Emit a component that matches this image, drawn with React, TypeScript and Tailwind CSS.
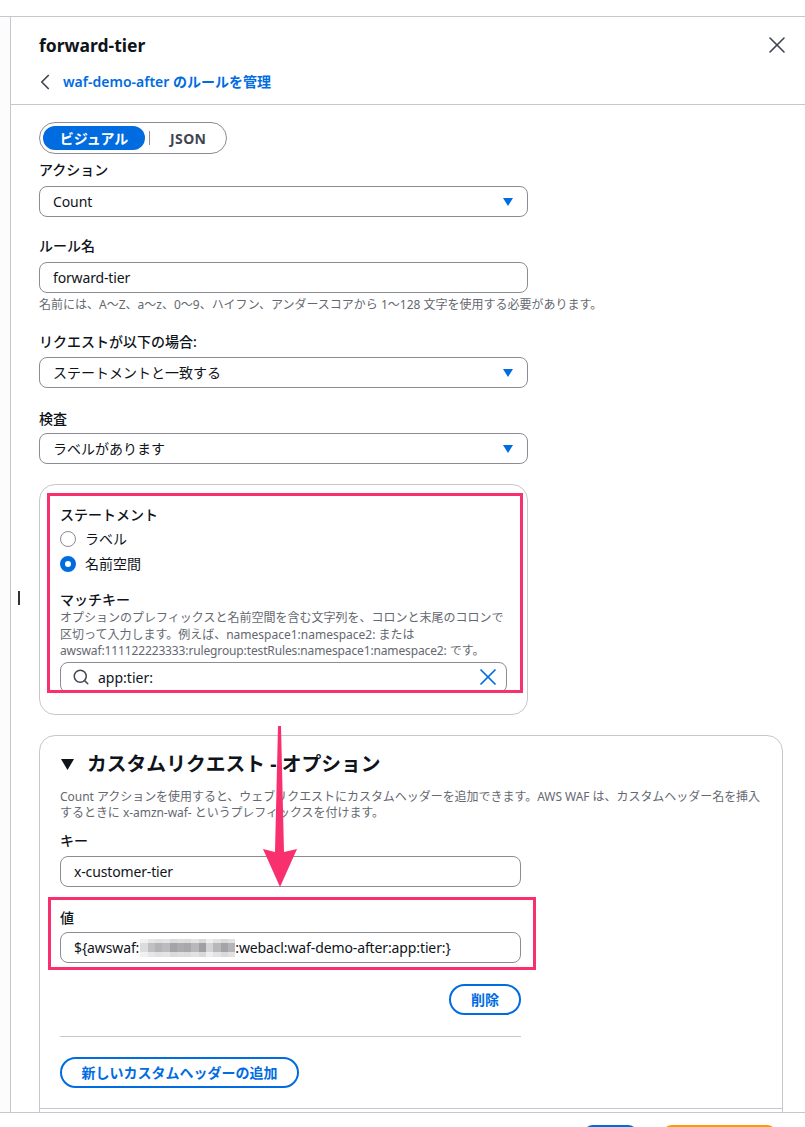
import { ChevronLeft, Search, X } from 'lucide-react';
import type { ReactNode } from 'react';

function Label({ children, className = '' }: { children: ReactNode; className?: string }) {
  return <div className={`text-[14px] leading-[20px] font-medium text-[#0f141a] ${className}`}>{children}</div>;
}

function Field({
  children,
  className = '',
  padding = 'pl-[13px] pr-[14px]',
}: {
  children: ReactNode;
  className?: string;
  padding?: string;
}) {
  return (
    <div
      className={`flex h-[31px] items-center rounded-lg border border-[#8c8c94] bg-white text-[14px] text-[#0f141a] ${padding} ${className}`}
    >
      {children}
    </div>
  );
}

function Select({ value, className = '' }: { value: string; className?: string }) {
  return (
    <Field className={`justify-between ${className}`}>
      <span>{value}</span>
      <svg width="10" height="8" viewBox="0 0 10 8">
        <path d="M0 0h10L5 8z" fill="#006ce0" />
      </svg>
    </Field>
  );
}

function Radio({ checked, label }: { checked?: boolean; label: string }) {
  return (
    <div className="flex h-[25px] items-center gap-[9px] text-[14px] text-[#0f141a]">
      {checked ? (
        <span className="h-4 w-4 rounded-full border-[5px] border-[#006ce0] bg-white" />
      ) : (
        <span className="h-4 w-4 rounded-full border border-[#8c8c94] bg-white" />
      )}
      <span>{label}</span>
    </div>
  );
}

function PillButton({ children, className = '' }: { children: ReactNode; className?: string }) {
  return (
    <div
      className={`flex h-[31px] items-center justify-center rounded-full border-2 border-[#006ce0] text-[14px] font-semibold text-[#006ce0] ${className}`}
    >
      {children}
    </div>
  );
}

const blurCells = [
  'bg-[#dcdcdc]', 'bg-[#c0c0c2]', 'bg-[#b4b4b7]', 'bg-[#bcbcbe]', 'bg-[#a4a4a8]', 'bg-[#acacaf]',
  'bg-[#a8a8ab]', 'bg-[#b8b8ba]', 'bg-[#a0a0a4]', 'bg-[#d4d4d4]', 'bg-[#b8b8ba]', 'bg-[#a4a4a8]', 'bg-[#b4b4b6]',
];

export default function App() {
  return (
    <div className="relative h-[1127px] w-[805px] overflow-hidden bg-white font-['Noto_Sans','Noto_Sans_CJK_JP',sans-serif]">
      <div className="h-[17px] border-b border-[#c6c6cd]" />
      <div className="flex h-[1096px]">
        <div className="w-[11px] shrink-0 border-r border-[#c6c6cd] bg-[#fcfcfc]" />
        <div className="min-w-0 flex-1">
          <div className="relative h-[88px] border-b border-[#c6c6cd] pl-[28px]">
            <div className="pt-[16px] text-[17.5px] leading-[24px] font-bold text-[#0f141a]">forward-tier</div>
            <div className="mt-[15px] flex items-center text-[14px] leading-[20px] font-semibold text-[#006ce0]">
              <ChevronLeft size={26} strokeWidth={1.6} className="-my-[3px] -ml-[7px] mr-[5px] text-[#424650]" />
              waf-demo-after のルールを管理
            </div>
            <X size={28} strokeWidth={1.4} className="absolute right-[14px] top-[14px] text-[#424650]" />
          </div>

          <div className="pl-[28px] pt-[17px]">
            <div className="flex h-[32px] w-[188px] items-center rounded-full border border-[#8c8c94] pl-[3px]">
              <div className="flex h-[24px] w-[102px] items-center justify-center rounded-full bg-[#006ce0] text-[14px] font-bold text-white">
                ビジュアル
              </div>
              <div className="ml-[4px] h-[14px] w-px bg-[#8c8c94]" />
              <div className="ml-[20px] text-[14px] font-bold tracking-[0.4px] text-[#424650]">JSON</div>
            </div>

            <Label className="mt-[6px]">アクション</Label>
            <Select value="Count" className="mt-[6px] w-[489px] tracking-[-0.1px]" />

            <Label className="mt-[19px]">ルール名</Label>
            <Field className="mt-[6px] w-[489px] tracking-[-0.15px]">forward-tier</Field>
            <div className="mt-[4px] text-[12px] leading-[16px] text-[#656871]">
              名前には、A〜Z、a〜z、0〜9、ハイフン、アンダースコアから 1〜128 文字を使用する必要があります。
            </div>

            <Label className="mt-[19px]">リクエストが以下の場合:</Label>
            <Select value="ステートメントと一致する" className="mt-[5px] w-[489px]" />

            <Label className="mt-[21px]">検査</Label>
            <Select value="ラベルがあります" className="mt-[4px] w-[489px]" />

            <div className="mt-[20px] h-[231px] w-[489px] rounded-2xl border border-[#c6c6cd] pl-[20px] pr-[20px] pt-[20px]">
              <Label>ステートメント</Label>
              <div className="mt-[1px]">
                <Radio label="ラベル" />
                <Radio checked label="名前空間" />
              </div>
              <Label className="mt-[14px]">マッチキー</Label>
              <div className="text-[12px] leading-[16.5px] text-[#656871]">
                オプションのプレフィックスと名前空間を含む文字列を、コロンと末尾のコロンで区切って入力します。例えば、namespace1:namespace2: または{' '}
                <span className="tracking-[-0.13px]">awswaf:111122223333:rulegroup:testRules:namespace1:namespace2:</span> です。
              </div>
              <Field className="mt-[2px] w-[447px]" padding="pl-[11px] pr-[4px]">
                <Search size={18} className="mr-[8px] text-[#424650]" />
                <span className="flex-1">app:tier:</span>
                <X size={28} strokeWidth={1.5} className="text-[#006ce0]" />
              </Field>
            </div>

            <div className="mt-[20px] h-[400px] w-[744px] rounded-t-2xl border border-[#c6c6cd] px-[20px] pt-[14px]">
              <div className="flex items-center text-[19.8px] leading-[28px] font-bold text-[#0f141a]">
                <svg width="13" height="11" viewBox="0 0 13 11" className="ml-[1px] mr-[13px]">
                  <path d="M0 0h13L6.5 11z" fill="#0f141a" />
                </svg>
                カスタムリクエスト - オプション
              </div>
              <div className="mt-[11px] text-[12px] leading-[16px] tracking-[-0.04px] text-[#656871]">
                Count アクションを使用すると、ウェブリクエストにカスタムヘッダーを追加できます。AWS WAF は、カスタムヘッダー名を挿入するときに x-amzn-waf- というプレフィックスを付けます。
              </div>
              <div className="w-[461px]">
                <Label className="mt-[10px]">キー</Label>
                <Field className="mt-[5px] tracking-[-0.15px]">x-customer-tier</Field>
                <Label className="mt-[21px]">値</Label>
                <Field className="mt-[4px] tracking-[-0.12px]">
                  {'${awswaf:'}
                  <span className="relative ml-[1px] inline-block h-[18px] w-[95px] overflow-hidden">
                    <span className="flex h-full">
                      {blurCells.map((c, i) => (
                        <span key={i} className={`h-full flex-1 ${c}`} />
                      ))}
                    </span>
                    <span className="absolute left-0 top-0 h-[4px] w-full bg-white/60" />
                    <span className="absolute bottom-0 left-0 h-[5px] w-full bg-white/60" />
                  </span>
                  :webacl:waf-demo-after:app:tier:{'}'}
                </Field>
                <div className="mt-[21px] flex justify-end">
                  <PillButton className="w-[72px]">削除</PillButton>
                </div>
                <div className="mt-[21px] h-px bg-[#c6c6cd]" />
                <PillButton className="mt-[20px] w-[239px]">新しいカスタムヘッダーの追加</PillButton>
              </div>
              <div className="-mx-[20px] mt-[20px] h-px bg-[#c6c6cd]" />
            </div>
          </div>
        </div>
      </div>

      {/* footer */}
      <div className="absolute left-0 top-[1112px] h-[15px] w-full border-t border-[#c6c6cd] bg-white">
        <div className="absolute left-[583px] top-[12px] h-[20px] w-[55px] rounded-full bg-[#006ce0]" />
        <div className="absolute left-[662px] top-[12px] h-[20px] w-[115px] rounded-full bg-[#ff9900]" />
      </div>

      {/* screenshot annotations */}
      <div className="absolute left-[18px] top-[591px] h-[14px] w-[2px] bg-[#333]" />
      <div className="pointer-events-none absolute left-[47px] top-[493px] h-[200px] w-[476px] border-[3px] border-[#f8306e]" />
      <div className="pointer-events-none absolute left-[48px] top-[897px] h-[73px] w-[488px] border-[3px] border-[#f8306e]" />
      <svg className="pointer-events-none absolute left-[260px] top-[724px]" width="40" height="164" viewBox="0 0 40 164">
        <path d="M18 2h3l3 126 13-3-17 38L3 125l12 3z" fill="#f8306e" />
      </svg>
    </div>
  );
}
